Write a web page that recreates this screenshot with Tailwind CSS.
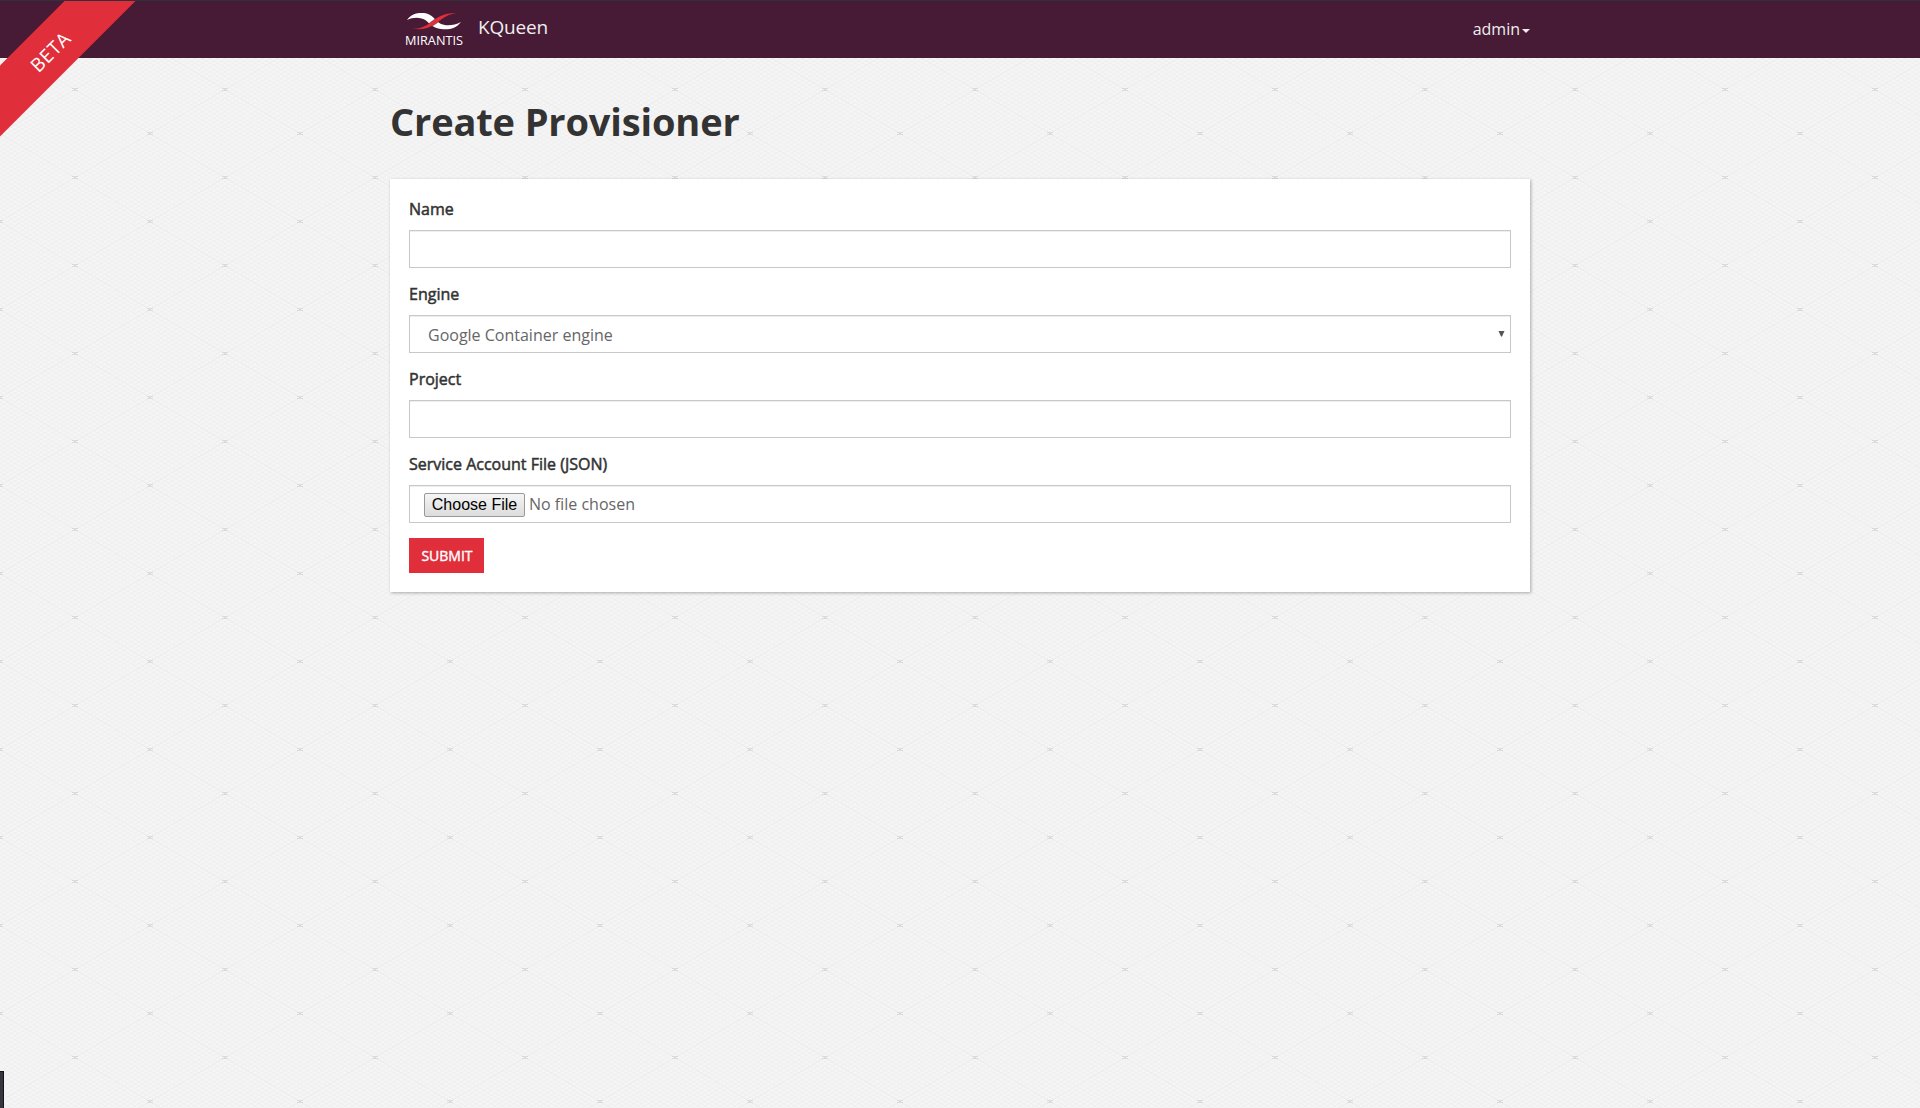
<!DOCTYPE html>
<html lang="en">
<head>
<meta charset="utf-8">
<title>KQueen</title>
<script src="https://cdn.jsdelivr.net/npm/@tailwindcss/browser@4"></script>
</head>
<body class="relative h-[1108px] overflow-hidden bg-[#f3f3f3] font-['Open_Sans',sans-serif] text-base text-[#333]">
<!-- Isometric grid background -->
<svg class="absolute inset-0 -z-10" width="1920" height="1108">
  <defs>
    <pattern id="grid" width="150" height="88" patternUnits="userSpaceOnUse" patternTransform="translate(0 1)">
      <path id="mesh" fill="none" stroke="#ededed" stroke-width=".7"/>
      <path d="M0 44.500L75 .5L150 44.500L75 88.500Z" fill="none" stroke="#ebebeb" stroke-width=".8"/>
      <path d="M0 43.500H3M0 45.500H3M0 44.500H1M147 43.500H150M147 45.500H150M149 44.500H150M72 87.500H78M72 1.500H78M74 .5H76" stroke="#dadada"/>
    </pattern>
  </defs>
  <rect width="1920" height="1108" fill="#f5f5f5"/>
  <rect width="1920" height="1108" fill="url(#grid)"/>
</svg>
<script>
  // Fine diagonals: twenty per tile in each direction
  let d = '';
  for (let x = -150; x <= 150; x += 7.5) d += `M${x} .5l150 88M${x} 88.5l150 -88`;
  document.getElementById('mesh').setAttribute('d', d);
</script>

<nav class="h-[58px] border-t border-[#2f2f3d] bg-[#471a35]">
  <div class="mx-auto flex h-full w-[1140px] items-start">
    <svg class="ml-[14px] mt-[11px] shrink-0 overflow-visible" width="60" height="38" viewBox="-1 0 60 38">
      <path d="M2 8C6 2 12 0.500 19 1C27 2 30 8 35 11.500C41 14.500 49 13.500 56 10C51 16.500 44 18 36 17C28 16 25 12 21 8.500C16 5 8 5 2 8Z" fill="#fff"/>
      <path d="M6 16.500C17 17 22 13 28 8.500C35 3 42 0.500 52 1C43 2.500 39 5.500 32 11C24 17 16 18.500 6 16.500Z" fill="#e22f3c" stroke="#471a35" stroke-width=".4"/>
      <text x="0" y="33" textLength="58" lengthAdjust="spacingAndGlyphs" font-family="Open Sans" font-size="12.500" fill="#fff">MIRANTIS</text>
    </svg>
    <span class="ml-[14px] mt-[12px] text-[19px] leading-7 tracking-[-0.2px] text-[#eee]">KQueen</span>
    <a class="ml-auto mt-[17px] flex items-center leading-[23px] text-[#eee]">admin<span class="ml-[2px] mt-[2px] border-x-4 border-t-4 border-x-transparent border-t-[#eee]"></span></a>
  </div>
</nav>

<div class="absolute left-0 top-px h-[140px] w-[140px] overflow-hidden">
  <svg width="140" height="140" viewBox="0 0 140 140">
    <path d="M64.500 0H135.500L0 135.500V64.500Z" fill="#e02f3b"/>
    <text transform="translate(38.500 72.500) rotate(-45)" font-family="Open Sans" font-size="19" textLength="47" fill="#fff">BETA</text>
  </svg>
</div>

<main class="mx-auto w-[1140px]">
  <h1 class="mt-[39px] h-[48px] whitespace-nowrap text-[38px] font-bold leading-[48px] tracking-[-0.15px]">Create Provisioner</h1>
  <form class="mt-[34px] bg-white p-[19px] shadow-[1px_1px_3px_rgba(0,0,0,0.3)]">
    <label class="block h-8 leading-[23px] [-webkit-text-stroke:0.5px_#333]">Name</label>
    <div class="mb-[15px] h-[38px] border border-[#c8c8c8] shadow-[inset_0_1px_1px_rgba(0,0,0,0.075)]"></div>
    <label class="block h-8 leading-[23px] [-webkit-text-stroke:0.5px_#333]">Engine</label>
    <div class="mb-[15px] flex h-[38px] items-center justify-between border border-[#c8c8c8] pl-[18px] pr-[5px] text-[#666] shadow-[inset_0_1px_1px_rgba(0,0,0,0.075)]">
      <span class="pt-0.5">Google Container engine</span>
      <svg width="7" height="6"><path d="M.5 0H6.500L4 5.500H3Z" fill="#555"/></svg>
    </div>
    <label class="block h-8 leading-[23px] [-webkit-text-stroke:0.5px_#333]">Project</label>
    <div class="mb-[15px] h-[38px] border border-[#c8c8c8] shadow-[inset_0_1px_1px_rgba(0,0,0,0.075)]"></div>
    <label class="block h-8 leading-[23px] [-webkit-text-stroke:0.5px_#333]">Service Account File (JSON)</label>
    <div class="mb-[15px] flex h-[38px] items-center border border-[#c8c8c8] pl-[14px] text-[#666] shadow-[inset_0_1px_1px_rgba(0,0,0,0.075)]">
      <span class="mt-0.5 flex h-6 w-[101px] items-center justify-center whitespace-nowrap rounded-[2px] border border-[#999] bg-linear-to-b from-[#f5f5f5] to-[#dcdcdc] font-['Liberation_Sans',sans-serif] text-black">Choose File</span>
      <span class="ml-1">No file chosen</span>
    </div>
    <button class="block h-[35px] w-[75px] bg-[#e02f3b] pl-px text-sm text-white [-webkit-text-stroke:0.4px_#fff]">SUBMIT</button>
  </form>
</main>

<div class="absolute bottom-0 left-0 h-[37px] w-1 border-r border-t border-[#1a1216] bg-[#35353f]"></div>
</body>
</html>
